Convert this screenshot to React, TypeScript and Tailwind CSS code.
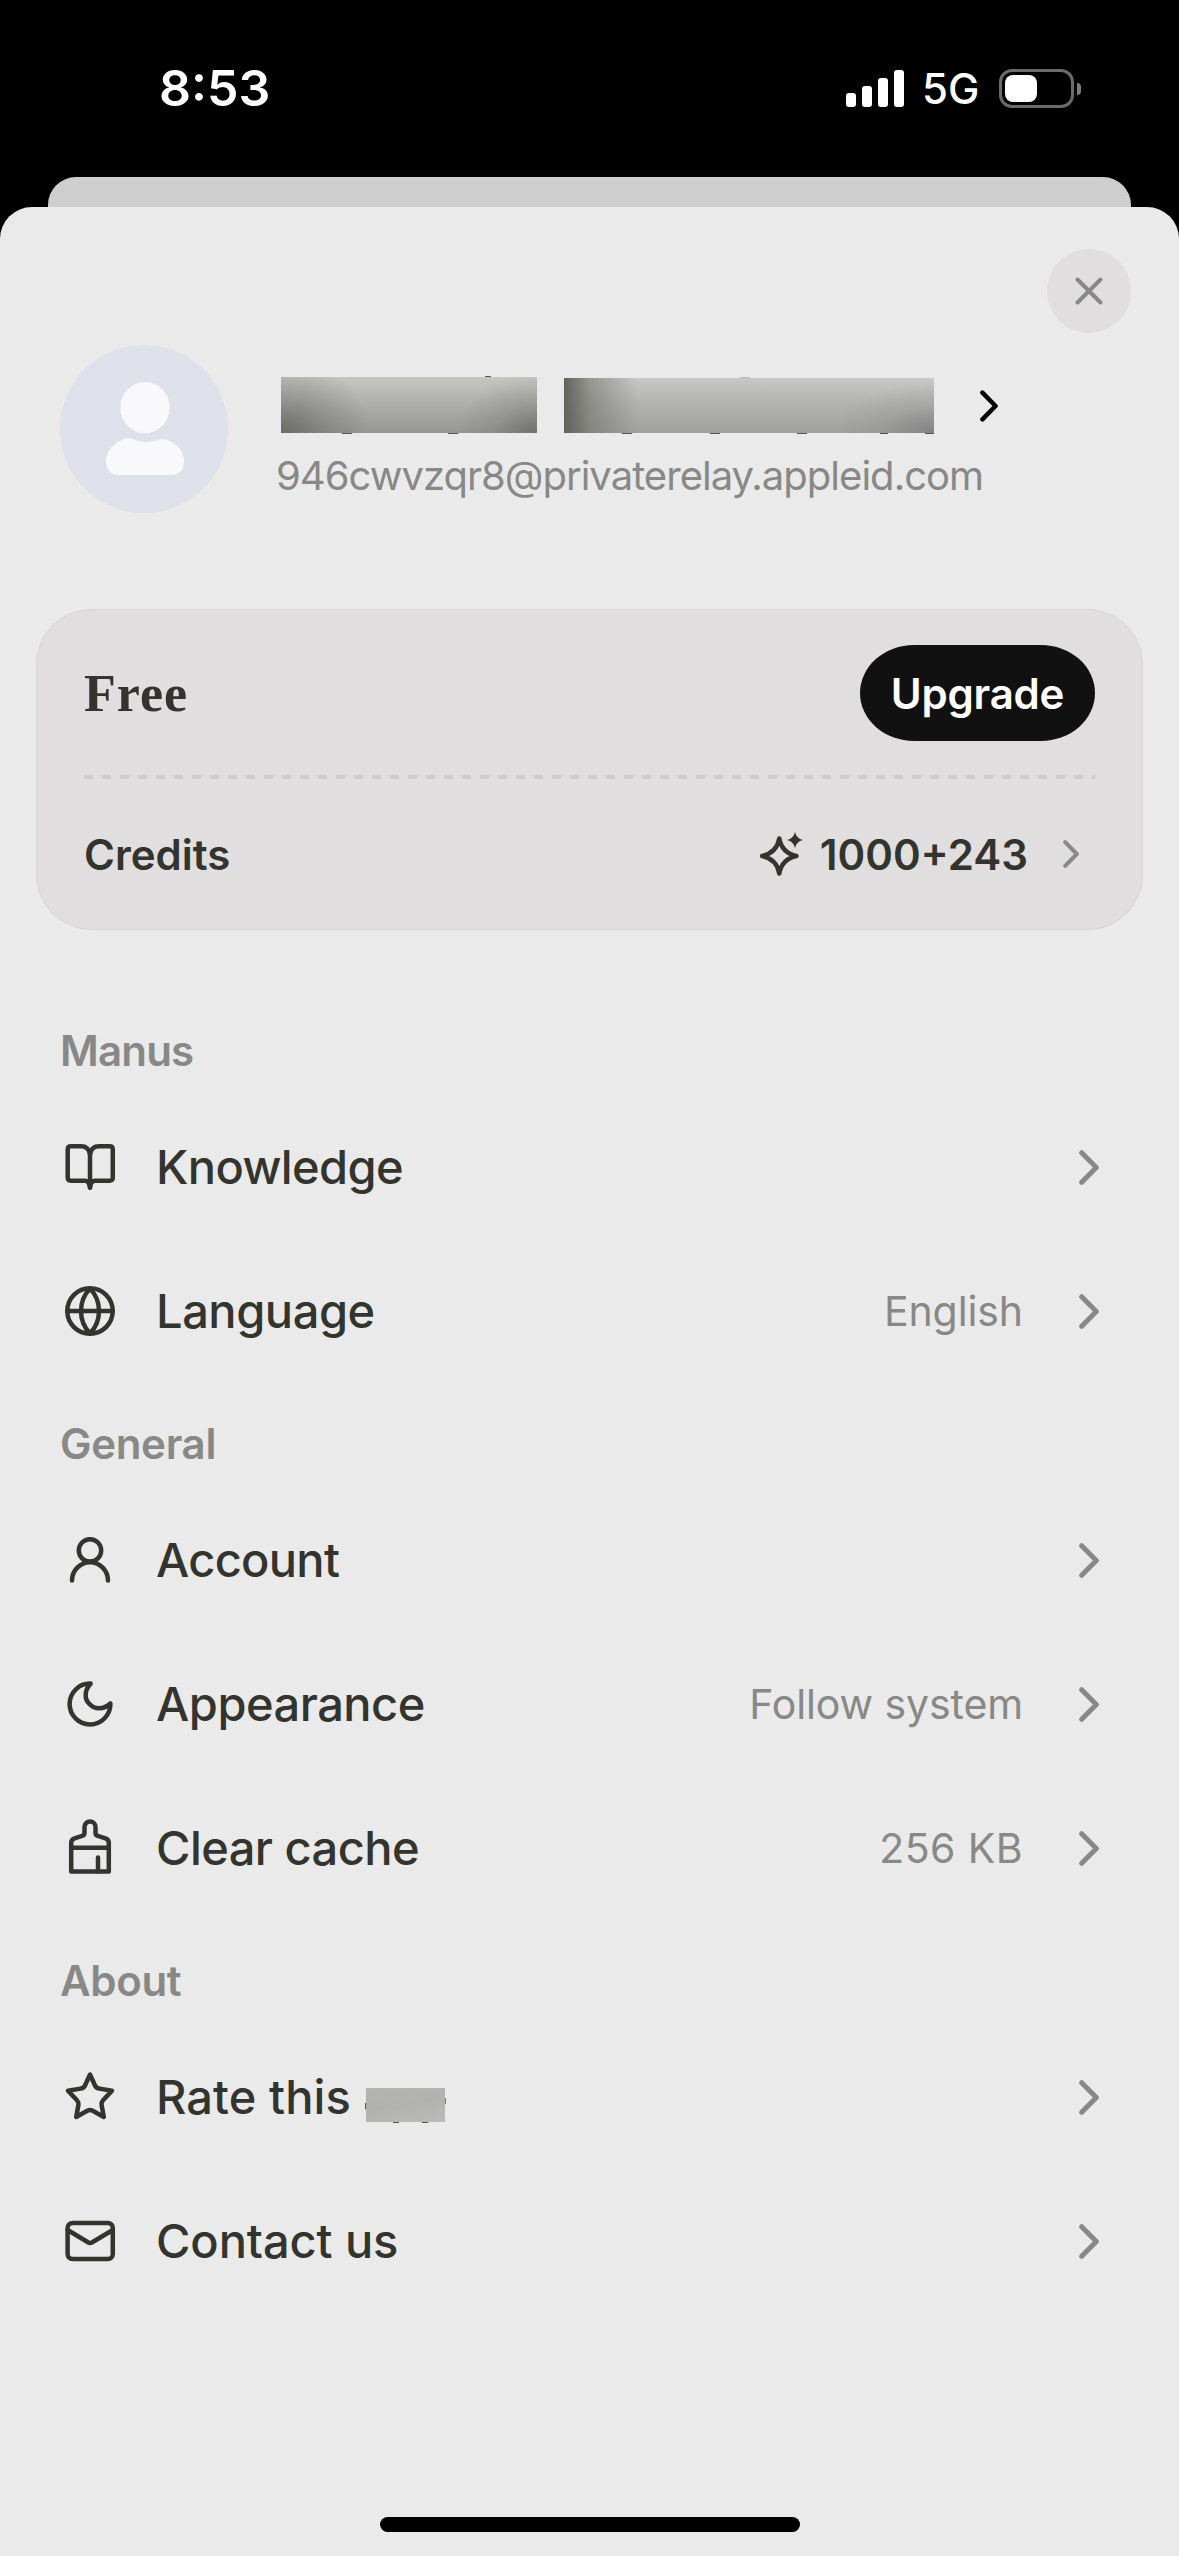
import type { ReactNode } from "react";

type RowProps = {
  icon: ReactNode;
  label: string;
  tracking: string;
  value?: string;
  valueTracking?: string;
  extra?: ReactNode;
};

function Icon({ children }: { children: ReactNode }) {
  return (
    <svg
      className="h-[60px] w-[60px] shrink-0"
      viewBox="0 0 60 60"
      fill="none"
      stroke="currentColor"
      strokeWidth="4.5"
      strokeLinecap="round"
      strokeLinejoin="round"
    >
      {children}
    </svg>
  );
}

const BookIcon = () => (
  <Icon>
    <path d="M30 17C29 12 26 9.3 21 9.3H11Q7.7 9.3 7.7 12.5V40.5Q7.7 43.7 11 43.7H25Q29 43.7 30 50.5" />
    <path d="M30 17C31 12 34 9.3 39 9.3H49.5Q52.8 9.3 52.8 12.5V40.5Q52.8 43.7 49.5 43.7H35Q31 43.7 30 50.5" />
    <path d="M30 15V50.5" />
  </Icon>
);

const GlobeIcon = () => (
  <Icon>
    <circle cx="30" cy="30" r="22.7" />
    <path d="M7.3 30H52.7" />
    <path d="M30 7.5C18 20 18 40 30 52.5C42 40 42 20 30 7.5Z" />
  </Icon>
);

const UserIcon = () => (
  <Icon>
    <circle cx="30" cy="20.4" r="11.2" />
    <path d="M12 50.5A18 18.3 0 0 1 48 50.5" />
  </Icon>
);

const MoonIcon = () => (
  <Icon>
    <path d="M30.6 9.6C24.5 16 24 25 29.5 30C34.5 35.5 43.5 36 50.4 29.5A20.4 20.4 0 1 1 30.6 9.6Z" />
  </Icon>
);

const BrushIcon = () => (
  <Icon>
    <path d="M11.2 53.5V25Q11.2 21.5 14.5 20.3L21.5 18.2Q24.5 17.4 24.5 15V9A5.5 5.5 0 0 1 35.5 9V15Q35.5 17.4 38.5 18.2L45.5 20.3Q48.8 21.5 48.8 25V53.5Z" />
    <path d="M11.2 29.7H48.8M38 39.5V53.5" />
  </Icon>
);

const StarIcon = () => (
  <Icon>
    <path d="M30 7.5L25 18.5Q23.8 21.2 20.5 21.6L8 23.7L17 33.3Q18.8 35.3 18.4 38L16.2 50L27.3 43.8Q30 42.4 32.7 43.8L43.8 50L41.6 38Q41.2 35.3 43 33.3L52 23.7L39.5 21.6Q36.2 21.2 35 18.5Z" />
  </Icon>
);

const MailIcon = () => (
  <Icon>
    <rect x="7.6" y="11.9" width="45.2" height="36.2" rx="5" />
    <path d="M7.6 19L28 31.3Q30 32.6 32.3 31.3L52.8 19" />
  </Icon>
);

function Chevron({ className }: { className: string }) {
  return (
    <svg
      className={className}
      viewBox="0 0 20 35"
      fill="none"
      stroke="currentColor"
      strokeWidth="5"
      strokeLinecap="round"
      strokeLinejoin="round"
    >
      <path d="M2.7 2.7L17.3 17.5L2.7 32.3" />
    </svg>
  );
}

function StatusBar() {
  return (
    <div className="flex h-[177px] items-center justify-between pr-[98px] pl-[159px] text-white">
      <span className="pb-0.5 text-[50px] leading-none font-semibold">8:53</span>
      <div className="flex items-center">
        <div className="flex h-[37px] items-end gap-1.5">
          <i className="h-3.5 w-2.5 rounded-[3px] bg-white" />
          <i className="h-[21px] w-2.5 rounded-[3px] bg-white" />
          <i className="h-[29px] w-2.5 rounded-[3px] bg-white" />
          <i className="h-[37px] w-2.5 rounded-[3px] bg-white" />
        </div>
        <span className="ml-[18px] w-[77px] text-[42px] leading-none font-[450]">5G</span>
        <div className="h-[39px] w-[75px] rounded-[13px] border-3 border-[#6b6b6b] p-[3px]">
          <div className="h-[27px] w-8 rounded-[8px] bg-white" />
        </div>
        <i className="ml-[3px] h-3 w-1 rounded-r-full bg-[#7d7d7d]" />
      </div>
    </div>
  );
}

function Profile() {
  return (
    <div className="mt-3 flex h-[168px] pl-[60px]">
      <svg className="h-[168px] w-[168px] shrink-0" viewBox="0 0 168 168">
        <circle cx="84" cy="84" r="84" fill="#dee1e9" />
        <rect x="60.5" y="37" width="49" height="51" rx="24.5" fill="#f9f9fc" />
        <path
          fill="#f9f9fc"
          d="M46 116C46 106 55 97 65 93.5C68 92.5 71 93.5 74 94.8Q85 99 96 95.5C99 94.5 102 93.6 105 94.3C116 97 124 106 124 116Q124 130 109 130H61Q46 130 46 116Z"
        />
      </svg>
      <div className="ml-[47px] pt-8">
        <div className="flex h-14 items-center pl-1.5">
          {/* hidden first and last name */}
          <div className="relative h-14 w-64 bg-[radial-gradient(ellipse_90px_75px_at_0%_100%,#62625ccc_0%,#62625c55_50%,transparent_100%),radial-gradient(ellipse_80px_60px_at_100%_100%,#686866cc_0%,#68686644_50%,transparent_100%),linear-gradient(#c6c7c2,#b0b0ae_45%,#969694)]">
            <i className="absolute -top-px left-[204px] h-px w-1.5 bg-[#555]" />
            <i className="absolute -bottom-px left-[61px] h-px w-2.5 bg-[#555]" />
            <i className="absolute -bottom-px left-[167px] h-px w-2.5 bg-[#555]" />
          </div>
          <div className="relative mt-px ml-[27px] h-[55px] w-[370px] bg-[linear-gradient(90deg,#62625c_0%,#66666080_7%,transparent_20%),radial-gradient(ellipse_100px_50px_at_100%_100%,#7c7c7ccc_0%,#7c7c7c33_55%,transparent_100%),linear-gradient(#c8c8c7,#b3b3b2_45%,#a0a09e)]">
            <i className="absolute -top-px left-[176px] h-px w-2.5 bg-[#bbb]" />
            <i className="absolute -bottom-px left-[58px] h-px w-2.5 bg-[#555]" />
            <i className="absolute -bottom-px left-[146px] h-px w-2.5 bg-[#555]" />
            <i className="absolute -bottom-px left-[233px] h-px w-2.5 bg-[#555]" />
            <i className="absolute -bottom-px left-[316px] h-px w-2 bg-[#555]" />
            <i className="absolute -bottom-px left-[361px] h-px w-[9px] bg-[#555]" />
          </div>
          <Chevron className="mt-0.5 ml-[46px] h-8 w-[18px] text-black" />
        </div>
        <p className="mt-[19px] pl-px text-[40px] leading-[48px] tracking-[-0.98px] text-[#888887]">
          946cwvzqr8@privaterelay.appleid.com
        </p>
      </div>
    </div>
  );
}

function PlanCard() {
  return (
    <div className="mx-9 mt-24 h-[321px] rounded-[56px] bg-[#e0dedf] px-12 pt-9 shadow-[inset_0_0_0_1px_#d7d5d6]">
      <div className="flex h-24 items-center justify-between">
        <span className="pt-0.5 font-['Liberation_Serif',serif] text-[52px] leading-none font-bold tracking-[1px]">
          Free
        </span>
        <button className="h-24 w-[235px] rounded-[54px/48px] bg-[#111111] text-[42px] font-semibold tracking-[-0.2px] text-white">
          Upgrade
        </button>
      </div>
      <div className="mt-[34px] h-1 bg-[repeating-linear-gradient(90deg,#cecccd_0_9px,transparent_9px_18px)]" />
      <div className="mt-[43px] flex h-16 items-center pr-4 text-[42px] font-semibold">
        <span className="flex-1">Credits</span>
        <svg className="h-11 w-[43px]" viewBox="0 0 43 44" fill="none">
          <path
            d="M19.3 6.5Q22 21 36.5 24Q22 27 19.3 41.5Q16.6 27 2 24Q16.6 21 19.3 6.5Z"
            stroke="currentColor"
            strokeWidth="4.4"
            strokeLinejoin="round"
          />
          <path d="M35 0Q36.5 6.5 43 8Q36.5 9.5 35 16Q33.5 9.5 27 8Q33.5 6.5 35 0Z" fill="currentColor" />
        </svg>
        <span className="ml-[17px]">1000+243</span>
        <Chevron className="ml-[35px] h-7 w-4 text-[#888887]" />
      </div>
    </div>
  );
}

function Section({ title, tracking, children }: { title: string; tracking: string; children: ReactNode }) {
  return (
    <section className="mt-[17px]">
      <h2 className={`flex h-[88px] items-center pb-0.5 pl-[60px] text-[42px] font-semibold text-[#888887] ${tracking}`}>
        {title}
      </h2>
      {children}
    </section>
  );
}

function Row({ icon, label, tracking, value, valueTracking = "tracking-[-0.1px]", extra }: RowProps) {
  return (
    <div className="flex h-36 items-center pr-20 pl-[60px]">
      {icon}
      <span className={`ml-9 text-[47px] font-medium ${tracking}`}>{label}</span>
      {extra}
      <span className={`ml-auto pt-0.5 text-[41px] text-[#888887] ${valueTracking}`}>{value}</span>
      <Chevron className="ml-14 h-[35px] w-5 text-[#888887]" />
    </div>
  );
}

export default function App() {
  return (
    <main className="flex h-[2556px] w-[1179px] flex-col overflow-hidden bg-black font-['Inter',sans-serif] text-[#34342f]">
      <StatusBar />
      <div className="mx-12 h-[30px] rounded-t-[28px] bg-[#cecece]" />
      <div className="flex flex-1 flex-col rounded-t-[32px] bg-[#eaeaea] pt-[42px]">
        <button className="mr-12 ml-auto flex h-[84px] w-[84px] items-center justify-center rounded-full bg-[#e0dedf] text-[#888887]">
          <svg className="h-7 w-7" viewBox="0 0 28 28" stroke="currentColor" strokeWidth="4" strokeLinecap="round">
            <path d="M2.5 2.5L25.5 25.5M25.5 2.5L2.5 25.5" />
          </svg>
        </button>
        <Profile />
        <PlanCard />
        <div className="mt-[60px]">
          <Section title="Manus" tracking="tracking-[-0.8px]">
            <Row icon={<BookIcon />} label="Knowledge" tracking="tracking-[-0.6px]" />
            <Row icon={<GlobeIcon />} label="Language" tracking="tracking-[-0.45px]" value="English" />
          </Section>
          <Section title="General" tracking="tracking-[-0.3px]">
            <Row icon={<UserIcon />} label="Account" tracking="tracking-[-0.7px]" />
            <Row icon={<MoonIcon />} label="Appearance" tracking="tracking-[-0.5px]" value="Follow system" />
            <Row
              icon={<BrushIcon />}
              label="Clear cache"
              tracking="tracking-[-0.55px]"
              value="256 KB"
              valueTracking="tracking-[0.4px]"
            />
          </Section>
          <Section title="About" tracking="tracking-[-0.3px]">
            <Row
              icon={<StarIcon />}
              label="Rate this"
              tracking="tracking-[0.1px]"
              extra={
                <div className="relative mt-4 ml-[15px] h-[34px] w-[79px] bg-[linear-gradient(170deg,#b3b4b0,#b1b1ae_50%,#bbbbb9)]">
                  <i className="absolute top-[15px] -left-px h-1.5 w-px bg-[#555]" />
                  <i className="absolute top-2.5 -right-px h-1.5 w-px bg-[#777]" />
                  <i className="absolute -bottom-px left-[27px] h-px w-1.5 bg-[#555]" />
                  <i className="absolute -bottom-px left-14 h-px w-1.5 bg-[#555]" />
                </div>
              }
            />
            <Row icon={<MailIcon />} label="Contact us" tracking="tracking-[-0.1px]" />
          </Section>
        </div>
        <div className="mx-auto mt-auto mb-6 h-[15px] w-[420px] rounded-full bg-black" />
      </div>
    </main>
  );
}
